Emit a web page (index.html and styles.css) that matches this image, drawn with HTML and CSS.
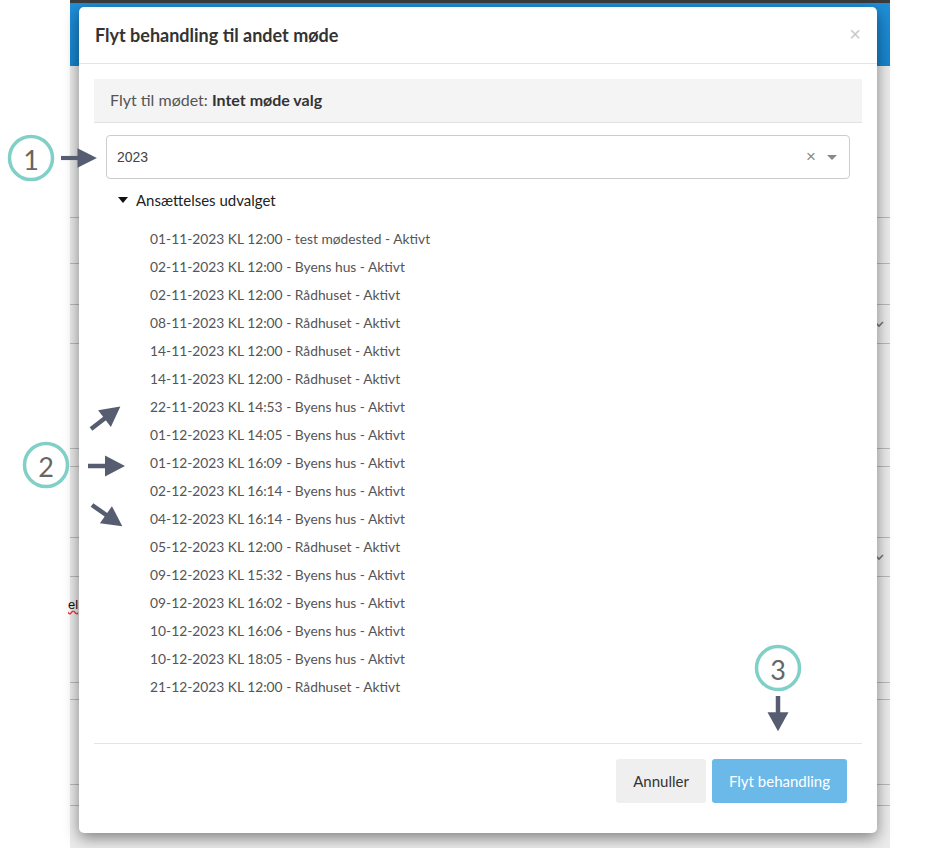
FILE: index.html
```html
<!DOCTYPE html>
<html lang="da">
<head>
<meta charset="utf-8">
<title>Flyt behandling</title>
<link rel="stylesheet" href="styles.css">
</head>
<body>
<div class="scene">
  <div class="page">
    <div class="topbar"></div>
    <div class="row" style="height:152px"></div>
    <div class="row" style="height:46px"></div>
    <div class="row" style="height:41px"></div>
    <div class="row chev-row" style="height:39px"><svg class="chev" width="10" height="8" viewBox="0 0 10 8"><path d="M1 2 L5 6 L9 2" fill="none" stroke="#777" stroke-width="1.6"/></svg></div>
    <div class="row" style="height:105px"></div>
    <div class="row" style="height:18px"></div>
    <div class="row" style="height:71px"></div>
    <div class="row chev-row" style="height:39px"><svg class="chev" width="10" height="8" viewBox="0 0 10 8"><path d="M1 2 L5 6 L9 2" fill="none" stroke="#777" stroke-width="1.6"/></svg></div>
    <div class="row textrow" style="height:106px"><span class="cut">el</span></div>
    <div class="row" style="height:17px"></div>
    <div class="row" style="height:85px"></div>
    <div class="row" style="height:21px"></div>
    <div class="row last"></div>
  </div>

  <div class="modal">
    <div class="modal-header">
      <h4 class="modal-title">Flyt behandling til andet møde</h4>
      <span class="close">×</span>
    </div>
    <div class="modal-body">
      <div class="info">Flyt til mødet: <strong>Intet møde valg</strong></div>
      <div class="select">
        <span class="select-value">2023</span>
        <span class="select-clear">×</span>
        <span class="select-arrow"></span>
      </div>
      <div class="tree">
        <div class="tree-head"><span class="caret"></span>Ansættelses udvalget</div>
        <ul class="items">
          <li>01-11-2023 KL 12:00 - test mødested - Aktivt</li>
          <li>02-11-2023 KL 12:00 - Byens hus - Aktivt</li>
          <li>02-11-2023 KL 12:00 - Rådhuset - Aktivt</li>
          <li>08-11-2023 KL 12:00 - Rådhuset - Aktivt</li>
          <li>14-11-2023 KL 12:00 - Rådhuset - Aktivt</li>
          <li>14-11-2023 KL 12:00 - Rådhuset - Aktivt</li>
          <li>22-11-2023 KL 14:53 - Byens hus - Aktivt</li>
          <li>01-12-2023 KL 14:05 - Byens hus - Aktivt</li>
          <li>01-12-2023 KL 16:09 - Byens hus - Aktivt</li>
          <li>02-12-2023 KL 16:14 - Byens hus - Aktivt</li>
          <li>04-12-2023 KL 16:14 - Byens hus - Aktivt</li>
          <li>05-12-2023 KL 12:00 - Rådhuset - Aktivt</li>
          <li>09-12-2023 KL 15:32 - Byens hus - Aktivt</li>
          <li>09-12-2023 KL 16:02 - Byens hus - Aktivt</li>
          <li>10-12-2023 KL 16:06 - Byens hus - Aktivt</li>
          <li>10-12-2023 KL 18:05 - Byens hus - Aktivt</li>
          <li>21-12-2023 KL 12:00 - Rådhuset - Aktivt</li>
        </ul>
      </div>
    </div>
    <div class="modal-footer">
      <button class="btn btn-default">Annuller</button>
      <button class="btn btn-primary">Flyt behandling</button>
    </div>
  </div>

  <svg class="annotations" width="937" height="848" viewBox="0 0 937 848">
    <defs>
      <g id="arr">
        <line x1="0" y1="0" x2="20" y2="0" stroke="#575d70" stroke-width="4.5"/>
        <polygon points="17,-10.5 37,0 17,10.5" fill="#575d70"/>
      </g>
    </defs>
    <circle cx="31" cy="158" r="21.5" fill="#fff" stroke="#80d0c7" stroke-width="3.5"/>
    <text x="31" y="159" class="num">1</text>
    <use href="#arr" transform="translate(61,158) scale(0.97,0.92)"/>

    <circle cx="46" cy="465" r="21.5" fill="#fff" stroke="#80d0c7" stroke-width="3.5"/>
    <text x="46" y="466" class="num">2</text>
    <use href="#arr" transform="translate(91,429) rotate(-37.5)"/>
    <use href="#arr" transform="translate(88,466)"/>
    <use href="#arr" transform="translate(92,505) rotate(35)"/>

    <circle cx="778" cy="668" r="21.5" fill="#fff" stroke="#80d0c7" stroke-width="3.5"/>
    <text x="778" y="669" class="num">3</text>
    <use href="#arr" transform="translate(778,696) rotate(90) scale(0.95,1)"/>
  </svg>
</div>
</body>
</html>
```

FILE: styles.css
```css
* { box-sizing: border-box; }
html, body { margin: 0; padding: 0; background: #fff; }
body { font-family: Lato, "Open Sans", "Liberation Sans", sans-serif; }

.scene { position: relative; width: 937px; height: 848px; overflow: hidden; }

.page {
  margin-left: 70px;
  width: 820px;
  height: 848px;
  background: #ebebeb;
  display: flex;
  flex-direction: column;
}
.topbar {
  height: 66px;
  flex: none;
  border-top: 3px solid #3b3b3b;
  background: linear-gradient(#1f8fd8, #1683cc);
}
.row {
  flex: none;
  border-bottom: 1px solid #b9b9b9;
  display: flex;
  align-items: center;
  justify-content: flex-end;
}
.row.last { flex: 1; border-bottom: none; }
.chev { margin-right: 6px; }
.textrow { justify-content: flex-start; align-items: flex-start; }
.cut {
  margin-left: -2px;
  margin-top: 20px;
  font-family: "Liberation Sans", sans-serif;
  font-size: 13px;
  color: #111;
  text-decoration: underline wavy #e33;
}

.modal {
  position: absolute;
  left: 79px;
  top: 7px;
  width: 798px;
  height: 826px;
  background: #fff;
  border-radius: 5px;
  box-shadow: 0 5px 15px rgba(0, 0, 0, 0.45);
  display: flex;
  flex-direction: column;
}
.modal-header {
  display: flex;
  align-items: center;
  justify-content: space-between;
  padding: 16px 16px 15px 16px;
  border-bottom: 1px solid #e5e5e5;
}
.modal-title {
  margin: 0;
  font-size: 18px;
  line-height: 25px;
  font-weight: 700;
  color: #333;
}
.close {
  font-family: "Liberation Sans", sans-serif;
  font-size: 20px;
  line-height: 20px;
  color: #c9c9c9;
  margin-top: -4px;
}

.modal-body {
  padding: 15px 15px 42px 15px;
  flex: 1;
}
.info {
  background: #f4f4f4;
  border-bottom: 1px solid #e2e2e2;
  padding: 11px 16px 12px 16px;
  font-size: 16px;
  line-height: 20px;
  color: #555;
}
.info strong { color: #333; font-weight: 700; }

.select {
  margin: 12px 12px 0 12px;
  height: 44px;
  border: 1px solid #ccc;
  border-radius: 4px;
  display: flex;
  align-items: center;
  padding: 0 12px 0 10px;
}
.select-value {
  flex: 1;
  font-family: "Liberation Sans", Arial, sans-serif;
  font-size: 14px;
  color: #444;
}
.select-clear {
  font-family: "Liberation Sans", sans-serif;
  font-size: 17px;
  color: #8a8a8a;
  margin-right: 11px;
  margin-top: -1px;
}
.select-arrow {
  width: 0;
  height: 0;
  border-left: 5px solid transparent;
  border-right: 5px solid transparent;
  border-top: 5px solid #888;
}

.tree { margin: 7px 0 0 24px; }
.tree-head {
  display: flex;
  align-items: center;
  font-size: 15px;
  line-height: 28px;
  color: #222;
}
.caret {
  width: 0;
  height: 0;
  border-left: 5px solid transparent;
  border-right: 5px solid transparent;
  border-top: 6px solid #111;
  margin-right: 8px;
}
.items {
  list-style: none;
  margin: 11px 0 0 0;
  padding: 0 0 0 32px;
}
.items li {
  font-size: 13.8px;
  line-height: 28px;
  color: #555;
  white-space: nowrap;
}

.modal-footer {
  margin: 0 15px;
  border-top: 1px solid #e5e5e5;
  padding: 15px 15px 30px 0;
  display: flex;
  justify-content: flex-end;
  gap: 6px;
}
.btn {
  height: 44px;
  border: none;
  border-radius: 3px;
  font-family: Lato, "Open Sans", sans-serif;
  font-size: 15px;
  padding: 0;
  white-space: nowrap;
}
.btn-default { background: #efefef; color: #333; width: 90px; }
.btn-primary { background: #6bb9e9; color: #fff; width: 135px; }

.annotations {
  position: absolute;
  left: 0;
  top: 0;
  pointer-events: none;
}
.num {
  font-family: Lato, "Open Sans", sans-serif;
  font-size: 27px;
  fill: #666;
  text-anchor: middle;
  dominant-baseline: central;
}
```
